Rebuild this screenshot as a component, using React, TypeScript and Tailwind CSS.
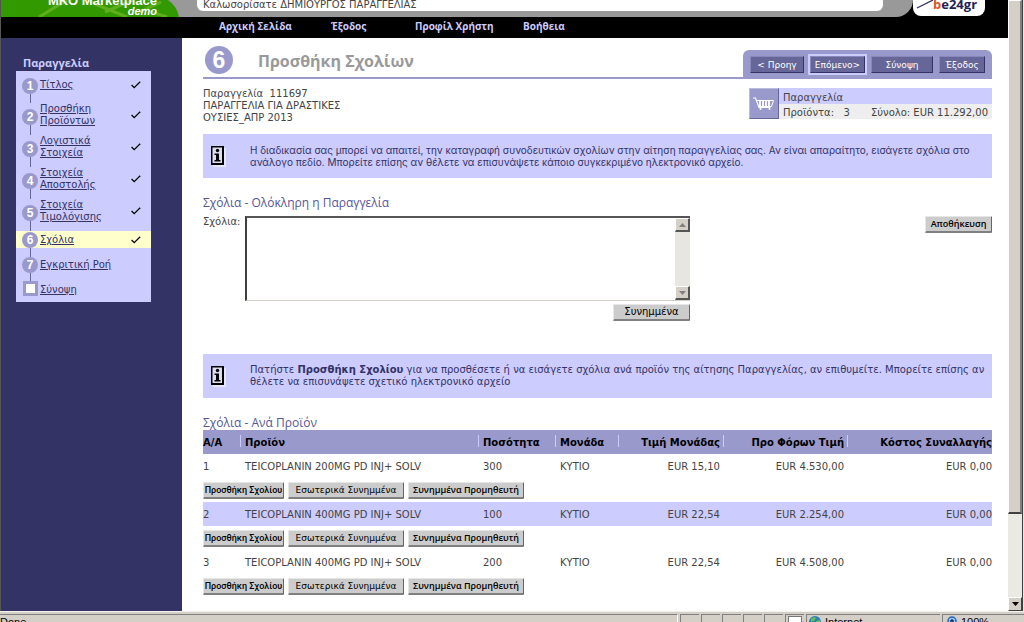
import { ReactNode } from "react";

interface Step {
  label: string[];
  done: boolean;
}

interface Item {
  id: number;
  name: string;
  qty: number;
  unit: string;
  price: string;
  net: string;
  cost: string;
}

const navLinks = [
  { label: "Αρχική Σελίδα", className: "w-[112px]" },
  { label: "Έξοδος", className: "w-[84px]" },
  { label: "Προφίλ Χρήστη", className: "w-[108px]" },
  { label: "Βοήθεια", className: "w-[60px]" },
];

const steps: Step[] = [
  { label: ["Τίτλος"], done: true },
  { label: ["Προσθήκη", "Προϊόντων"], done: true },
  { label: ["Λογιστικά", "Στοιχεία"], done: true },
  { label: ["Στοιχεία", "Αποστολής"], done: true },
  { label: ["Στοιχεία", "Τιμολόγισης"], done: true },
];

const items: Item[] = [
  { id: 1, name: "TEICOPLANIN 200MG PD INJ+ SOLV", qty: 300, unit: "ΚΥΤΙΟ", price: "EUR 15,10", net: "EUR 4.530,00", cost: "EUR 0,00" },
  { id: 2, name: "TEICOPLANIN 400MG PD INJ+ SOLV", qty: 100, unit: "ΚΥΤΙΟ", price: "EUR 22,54", net: "EUR 2.254,00", cost: "EUR 0,00" },
  { id: 3, name: "TEICOPLANIN 400MG PD INJ+ SOLV", qty: 200, unit: "ΚΥΤΙΟ", price: "EUR 22,54", net: "EUR 4.508,00", cost: "EUR 0,00" },
];

const columns = [
  { label: "Α/Α", width: "w-[38px]", right: false },
  { label: "Προϊόν", width: "", right: false },
  { label: "Ποσότητα", width: "w-[77px]", right: false },
  { label: "Μονάδα", width: "w-[63px]", right: false },
  { label: "Τιμή Μονάδας", width: "w-[105px]", right: true },
  { label: "Προ Φόρων Τιμή", width: "w-[124px]", right: true },
  { label: "Κόστος Συναλλαγής", width: "w-[144px]", right: true },
];

function CheckMark() {
  return (
    <svg className="h-2 w-2.5" viewBox="0 0 10 8" fill="none" stroke="#000" strokeWidth="1.3">
      <path d="M0.6 4 L3.2 6.6 L9.2 0.8" />
    </svg>
  );
}

function CartIcon() {
  return (
    <svg className="h-4 w-6" viewBox="0 0 24 16" fill="none" stroke="#fff">
      <path d="M1 2h2.500l3.500 9.500h11.500" strokeWidth="1.200" />
      <path d="M4.500 4.500h17l-2 6H6.500" strokeWidth="1" />
      <path d="M8 5v5M11 5v5M14 5v5M17 5v5" strokeWidth="1.800" />
      <circle cx="8.500" cy="13" r="1" fill="#fff" stroke="none" />
      <circle cx="17.500" cy="13" r="1" fill="#fff" stroke="none" />
    </svg>
  );
}

function InfoIcon() {
  return (
    <svg className="h-[21px] w-[15px] shrink-0" viewBox="0 0 15 21">
      <path d="M2 2h13v19H2z" fill="#e6e6f6" />
      <path d="M0 0h13v19H0z" fill="#000" />
      <path d="M1.500 1.500h9.500v15.500H1.500z" fill="#ddddf2" />
      <circle cx="6.500" cy="4.500" r="1.700" />
      <path d="M3.500 7.500h4.500v6.500h1.500v1.500h-6v-1.500h1.500V9H3.500z" />
    </svg>
  );
}

function Triangle({ down, color }: { down?: boolean; color: string }) {
  return (
    <svg className="h-1 w-[7px]" viewBox="0 0 7 4" fill={color}>
      <path d={down ? "M0 0h7L3.500 4z" : "M0 4h7L3.500 0z"} />
    </svg>
  );
}

function Bubble({ n }: { n: number }) {
  return (
    <span className="flex h-4 w-4 shrink-0 items-center justify-center rounded-full bg-[#9999cc] font-['Liberation_Sans'] text-[12px] font-bold leading-4 text-white">
      {n}
    </span>
  );
}

function StepLink({ label }: { label: string[] }) {
  return (
    <a href="#" className="block flex-1 pl-0.5 leading-3 text-[#333366] underline">
      {label.map((line) => (
        <span key={line} className="block">{line}</span>
      ))}
    </a>
  );
}

function Header() {
  return (
    <header>
      <div className="flex h-[17px] items-end overflow-hidden bg-black">
        <div className="flex h-full flex-1 items-end rounded-br-[18px] bg-[#999999]">
          <div className="relative flex h-full w-[180px] shrink-0 items-end justify-end bg-[#339900] pr-6 [clip-path:path('M0_0H167Q176_6_178_17H0z')]">
            <svg className="absolute inset-0 h-full w-full" viewBox="0 0 180 17" fill="none" stroke="#5fae1e" strokeWidth="3" preserveAspectRatio="none">
              <path d="M38 17 L66 0 M88 0 L96 5 L126 17 M104 12 L132 0 M150 12 L166 17 M134 14 L160 2" />
            </svg>
            <div className="relative pb-px text-right font-['Liberation_Sans'] font-bold text-white">
              <div className="text-[13px] leading-[10px]">MKO Marketplace</div>
              <div className="text-[11px] italic leading-[10px]">demo</div>
            </div>
          </div>
          <div className="mb-1.5 ml-4 mr-[30px] flex-1 rounded-b-md bg-white pl-1.5 text-[10px] leading-3 text-[#444]">
            Καλωσορίσατε ΔΗΜΙΟΥΡΓΟΣ ΠΑΡΑΓΓΕΛΙΑΣ
          </div>
        </div>
        <div className="mr-[23px] flex h-4 w-[72px] items-start self-start overflow-hidden rounded-b-lg bg-white">
          <svg className="h-4 w-5 shrink-0" viewBox="0 0 20 16" fill="none" stroke="#333366" strokeWidth="1.300">
            <path d="M4 8 L20 0" />
          </svg>
          <span className="font-['Open_Sans'] text-[13px] font-bold leading-[8px] text-[#222255]">
            <span className="text-[#dd5522]">b</span>e24gr
          </span>
        </div>
      </div>
      <nav className="flex h-[21px] bg-black pl-[218px] font-['Open_Sans'] text-[10px] font-bold leading-[18px] text-[#ccccff]">
        {navLinks.map((l) => (
          <a key={l.label} href="#" className={l.className}>{l.label}</a>
        ))}
      </nav>
    </header>
  );
}

function Sidebar() {
  return (
    <aside className="w-[181px] shrink-0 bg-[#333366] pl-[15px] pt-4">
      <h2 className="pl-[7px] font-['Open_Sans'] text-[11px] font-bold leading-[17px] text-[#ccccff]">Παραγγελία</h2>
      <ol className="w-[135px] bg-[#ccccff] text-[10px]">
        {steps.map((s, i) => (
          <li key={i} className="flex h-8 pl-1.5 pr-2.5">
            <div className={i === 0 ? "flex w-4 flex-col items-center pt-[7px]" : "flex w-4 flex-col items-center pt-1.5"}>
              <Bubble n={i + 1} />
              <span className="w-px flex-1 bg-[#666699]" />
            </div>
            <div className={i === 0 ? "flex flex-1 items-center self-start pt-2" : "flex flex-1 items-center self-start"}>
              <StepLink label={s.label} />
              {s.done && <CheckMark />}
            </div>
          </li>
        ))}
        <li className="flex h-[17px] items-center bg-[#ffffcc] pl-1.5 pr-2.5">
          <Bubble n={6} />
          <StepLink label={["Σχόλια"]} />
          <CheckMark />
        </li>
        <li className="flex items-end pl-1.5">
          <div className="flex w-4 flex-col items-center">
            <span className="h-[9px] w-px bg-[#666699]" />
            <Bubble n={7} />
          </div>
          <div className="flex-1 pb-0.5"><StepLink label={["Εγκριτική Ροή"]} /></div>
        </li>
        <li className="flex items-end pb-1.5 pl-1.5">
          <div className="flex w-4 flex-col items-center">
            <span className="h-2 w-px bg-[#666699]" />
            <span className="h-[15px] w-[15px] border-[3px] border-[#9999cc] bg-white" />
          </div>
          <StepLink label={["Σύνοψη"]} />
        </li>
      </ol>
    </aside>
  );
}

function GreyButton({ children, className }: { children: ReactNode; className: string }) {
  return (
    <button
      type="button"
      className={
        "h-[17px] shrink-0 whitespace-nowrap rounded-[1px] border border-b-2 border-b-[#808080] border-l-[#e6e6e6] border-r-[#666] border-t-[#e6e6e6] bg-[#cccccc] leading-3 text-black " +
        className
      }
    >
      {children}
    </button>
  );
}

function TabButton({ children, className }: { children: ReactNode; className: string }) {
  return (
    <button
      type="button"
      className={
        "h-[17px] whitespace-nowrap border border-b-[#333366] border-l-[#8888bb] border-r-[#333366] border-t-[#8888bb] bg-[#666699] text-[9px] leading-3 text-white " +
        className
      }
    >
      {children}
    </button>
  );
}

function InfoBox({ children, className = "" }: { children: ReactNode; className?: string }) {
  return (
    <div className={"flex h-11 items-center bg-[#ccccff] pl-2 text-[#333366] " + className}>
      <InfoIcon />
      <p className="flex-1 pl-6 leading-3">{children}</p>
    </div>
  );
}

function SectionTitle({ children }: { children: ReactNode }) {
  return <h2 className="pt-[17px] font-['Open_Sans'] text-[12px] leading-[15px] text-[#555599]">{children}</h2>;
}

function CommentsForm() {
  return (
    <form className="flex items-start pt-1.5">
      <label htmlFor="comments" className="w-[42px] shrink-0 leading-3">Σχόλια:</label>
      <div className="w-[445px]">
        <div className="flex h-[85px] border-b border-l-2 border-t-2 border-b-[#d4d0c8] border-l-[#404040] border-t-[#555] bg-white">
          <textarea id="comments" className="h-full flex-1 resize-none p-1 outline-none" />
          <div className="flex w-[15px] flex-col justify-between bg-[#e8e6e1]">
            <span className="flex h-[14px] items-center justify-center border border-b-2 border-r-2 border-b-[#555] border-l-white border-r-[#555] border-t-white bg-[#d4d0c8]">
              <Triangle color="#808080" />
            </span>
            <span className="flex h-[14px] items-center justify-center border border-b-2 border-r-2 border-b-[#555] border-l-white border-r-[#555] border-t-white bg-[#d4d0c8]">
              <Triangle down color="#808080" />
            </span>
          </div>
        </div>
        <div className="flex justify-end pt-[3px]">
          <GreyButton className="w-[77px] text-[10px]">Συνημμένα</GreyButton>
        </div>
      </div>
      <GreyButton className="ml-auto w-[67px] font-['Open_Sans'] text-[9px] font-semibold">Αποθήκευση</GreyButton>
    </form>
  );
}

function ItemRows({ item }: { item: Item }) {
  return (
    <>
      <tr className={item.id % 2 === 0 ? "h-6 bg-[#ccccff]" : "h-6"}>
        <td>{item.id}</td>
        <td className="pl-1">{item.name}</td>
        <td className="pl-1">{item.qty}</td>
        <td className="pl-1">{item.unit}</td>
        <td className="pr-1 text-right">{item.price}</td>
        <td className="pr-1 text-right">{item.net}</td>
        <td className="text-right">{item.cost}</td>
      </tr>
      <tr className="h-6">
        <td colSpan={7}>
          <div className="flex gap-1">
            <GreyButton className="w-[81px] font-['Roboto'] text-[9px] font-medium">Προσθήκη Σχολίου</GreyButton>
            <GreyButton className="w-[116px] text-[9px]">Εσωτερικά Συνημμένα</GreyButton>
            <GreyButton className="w-[116px] font-['Open_Sans'] text-[9px] font-semibold">Συνημμένα Προμηθευτή</GreyButton>
          </div>
        </td>
      </tr>
    </>
  );
}

function Main() {
  return (
    <main className="min-w-0 flex-1 bg-white pl-[21px] pr-4 pt-3 text-[10px] text-[#444]">
      <div className="flex items-end">
        <div className="flex h-[29px] flex-1 items-start border-b-2 border-[#9999cc]">
          <span className="ml-0.5 -mt-1 flex h-7 w-7 items-center justify-center rounded-full bg-[#9999cc] font-['Liberation_Sans'] text-[23px] font-bold text-white">6</span>
          <h1 className="pl-[25px] font-['Open_Sans'] text-[16px] font-bold leading-[22px] text-[#999]">Προσθήκη Σχολίων</h1>
        </div>
        <div className="flex h-[29px] items-center gap-1.5 rounded-t-md bg-[#9999cc] px-[7px]">
          <TabButton className="w-[54px]">&lt; Προηγ</TabButton>
          <TabButton className="w-[55px] outline-2 outline-[#ccccff]">Επόμενο&gt;</TabButton>
          <TabButton className="w-[62px]">Σύνοψη</TabButton>
          <TabButton className="w-[46px]">Έξοδος</TabButton>
        </div>
      </div>

      <div className="flex justify-between pb-2.5 pt-[9px]">
        <p className="w-[170px] leading-3">
          Παραγγελία&nbsp; 111697
          <br />
          ΠΑΡΑΓΓΕΛΙΑ ΓΙΑ ΔΡΑΣΤΙΚΕΣ ΟΥΣΙΕΣ_ΑΠΡ 2013
        </p>
        <div className="flex h-[31px] w-[243px]">
          <div className="flex w-[30px] items-center justify-center border border-b-[#666699] border-l-[#bbbbdd] border-r-[#666699] border-t-[#bbbbdd] bg-[#9999cc]">
            <CartIcon />
          </div>
          <div className="flex-1 leading-[14px]">
            <div className="h-4 bg-[#ccccff] pl-1 pt-[3px]">Παραγγελία</div>
            <div className="flex h-[15px] justify-between bg-[#eeeeee] pl-1 pr-1 pt-0.5">
              <span>Προϊόντα:&nbsp;&nbsp; 3</span>
              <span>Σύνολο: EUR 11.292,00</span>
            </div>
          </div>
        </div>
      </div>

      <InfoBox className="font-['Inter']">
        Η διαδικασία σας μπορεί να απαιτεί, την καταγραφή συνοδευτικών σχολίων στην αίτηση παραγγελίας σας. Αν είναι
        απαραίτητο, εισάγετε σχόλια στο ανάλογο πεδίο. Μπορείτε επίσης αν θέλετε να επισυνάψετε κάποιο συγκεκριμένο
        ηλεκτρονικό αρχείο.
      </InfoBox>

      <SectionTitle>Σχόλια - Ολόκληρη η Παραγγελία</SectionTitle>
      <CommentsForm />

      <div className="pt-[33px]">
        <InfoBox>
          Πατήστε <b>Προσθήκη Σχολίου</b> για να προσθέσετε ή να εισάγετε σχόλια ανά προϊόν της αίτησης Παραγγελίας, αν
          επιθυμείτε. Μπορείτε επίσης αν θέλετε να επισυνάψετε σχετικό ηλεκτρονικό αρχείο
        </InfoBox>
      </div>

      <SectionTitle>Σχόλια - Ανά Προϊόν</SectionTitle>
      <table className="w-full table-fixed border-collapse">
        <thead>
          <tr className="h-6 bg-[#9999cc] text-black">
            {columns.map((c, i) => (
              <th key={c.label} className={c.width + (i > 0 ? " pl-1" : "")}>
                <div className={c.right ? "flex justify-end gap-[3px]" : "flex justify-between"}>
                  <span className="whitespace-nowrap">{c.label}</span>
                  {i < columns.length - 1 && <span className="h-3 w-px bg-[#ccccff]" />}
                </div>
              </th>
            ))}
          </tr>
        </thead>
        <tbody>
          {items.map((item) => (
            <ItemRows key={item.id} item={item} />
          ))}
        </tbody>
      </table>
    </main>
  );
}

function PageScrollbar() {
  return (
    <div className="flex w-[15px] shrink-0 flex-col border-r border-[#404040] bg-[#ebe9e4]">
      <div className="h-[514px] border border-b-2 border-r-2 border-b-[#404040] border-l-white border-r-[#808080] border-t-white bg-[#d4d0c8]" />
      <div className="mt-auto flex h-[14px] items-center justify-center border border-b-[#404040] border-l-white border-r-[#404040] border-t-white bg-[#d4d0c8]">
        <Triangle down color="#000" />
      </div>
    </div>
  );
}

function StatusBar() {
  return (
    <footer className="flex h-[11px] shrink-0 items-start gap-0.5 overflow-hidden border-t border-[#f4f2ee] bg-[#d4d0c8] pt-0.5 font-['Liberation_Sans'] text-[11px] leading-3 text-black">
      <div className="h-3 flex-1 border-r border-t border-r-white border-t-[#808080] pt-px">Done</div>
      <div className="h-3 w-[19px] border-l border-t border-[#808080]" />
      <div className="h-3 w-[19px] border-l border-t border-[#808080]" />
      <div className="h-3 w-[19px] border-l border-t border-[#808080]" />
      <div className="h-3 w-[19px] border-l border-t border-[#808080]" />
      <div className="h-3 w-[19px] border-l border-t border-[#808080]" />
      <div className="h-3 w-[19px] border-l border-t border-[#808080] px-0.5 pt-px">
        <div className="h-3 border border-[#777] bg-white" />
      </div>
      <div className="flex h-3 w-[134px] gap-1 border-l border-t border-[#808080] pl-0.5 pt-px">
        <svg className="h-3 w-3" viewBox="0 0 12 12">
          <circle cx="6" cy="6" r="6" fill="#2a7fb8" />
          <path d="M2 3q3-3 5-1l-2 3-3 1zM7 5l4-1v4l-3 2z" fill="#6cc04a" />
        </svg>
        Internet
      </div>
      <div className="flex h-3 w-[82px] gap-1 border-l border-t border-[#808080] pl-1 pt-px">
        <svg className="h-3 w-2.5" viewBox="0 0 10 12">
          <circle cx="5" cy="5" r="4" fill="#9cc8f0" stroke="#2266bb" strokeWidth="1.500" />
          <path d="M5 3v4M3 5h4" stroke="#113377" strokeWidth="1.500" />
        </svg>
        100%
      </div>
    </footer>
  );
}

function App() {
  return (
    <div className="flex h-screen flex-col overflow-hidden bg-[#d4d0c8] font-['DejaVu_Sans',sans-serif]">
      <div className="flex min-h-0 flex-1 border-l border-[#555]">
        <div className="flex min-w-0 flex-1 flex-col overflow-hidden">
          <Header />
          <div className="flex flex-1">
            <Sidebar />
            <Main />
          </div>
        </div>
        <PageScrollbar />
        <div className="w-px shrink-0 bg-[#e8e6e1]" />
      </div>
      <StatusBar />
    </div>
  );
}

export default App;
